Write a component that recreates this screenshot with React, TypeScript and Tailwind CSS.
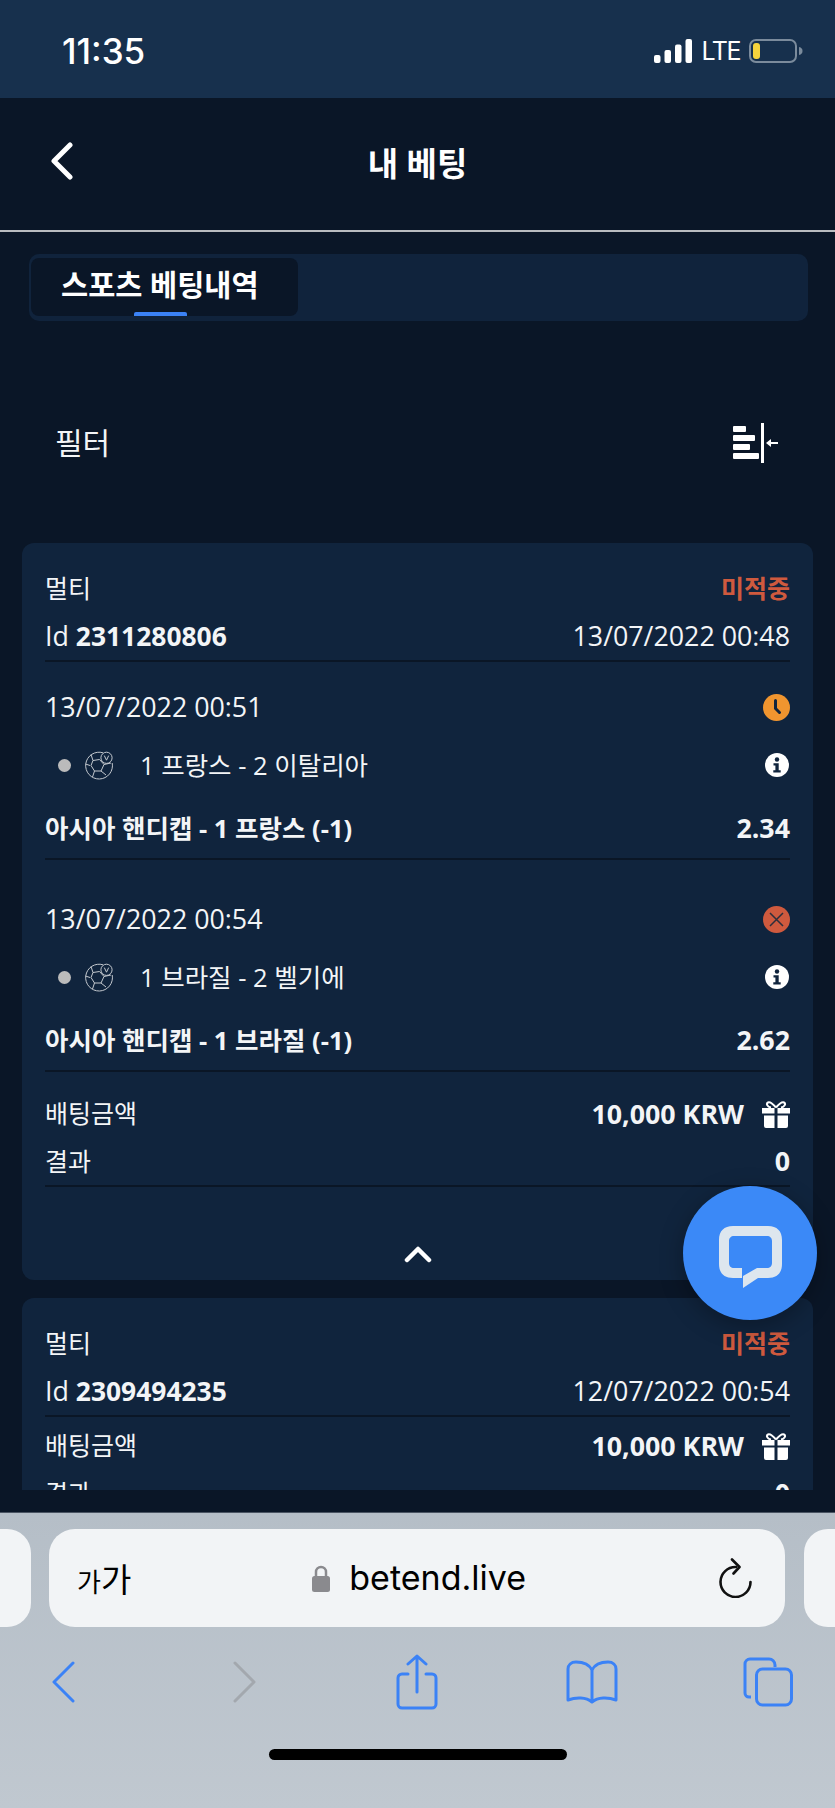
const FONT = "font-['Open_Sans','Noto_Sans_CJK_KR',sans-serif]";

function Row({ left, right, className = '' }: { left: React.ReactNode; right: React.ReactNode; className?: string }) {
  return (
    <div className={`flex items-center justify-between text-[25px] ${className}`}>
      <div>{left}</div>
      <div className="flex items-center">{right}</div>
    </div>
  );
}

function Num({ children, bold }: { children: React.ReactNode; bold?: boolean }) {
  return <span className={`text-[26.800px] ${bold ? 'font-bold' : ''}`}>{children}</span>;
}

function Divider() {
  return <div className="h-[2px] bg-[#0a1626]" />;
}

function Ball() {
  return (
    <svg width="30" height="29" viewBox="0 0 30 29" fill="none" stroke="#c3c8ce" strokeWidth="1">
      <path d="M19 1.800A13.400 13.400 0 1 0 28.200 12" />
      <circle cx="22.500" cy="6.800" r="5.600" />
      <path d="M20.300 4.600l2.200 4.600 2.200-4.600" />
      <path d="M9 9.500l6.500-1 4.500 5-3 6.500h-6.500l-3.500-5.500zM9 9.500L7 3.500M6 14.500l-4.500-1.500M10.500 20l-2 6M17 20l5 4M20 13.500l7-1.500" />
    </svg>
  );
}

function InfoIcon() {
  return (
    <svg width="24" height="24" viewBox="0 0 24 24">
      <circle cx="12" cy="12" r="12" fill="#fff" />
      <circle cx="12" cy="6.500" r="2.200" fill="#10243d" />
      <path d="M8.500 10.200h5.200v7h2v2.200H8.300v-2.200h2.100v-4.800H8.500z" fill="#10243d" />
    </svg>
  );
}

function ClockIcon() {
  return (
    <svg width="27" height="27" viewBox="0 0 27 27">
      <circle cx="13.500" cy="13.500" r="13.500" fill="#f0952f" />
      <path d="M12.500 6.500v8l4 4" fill="none" stroke="#10243d" strokeWidth="3" strokeLinecap="round" />
    </svg>
  );
}

function LostIcon() {
  return (
    <svg width="27" height="27" viewBox="0 0 27 27">
      <circle cx="13.500" cy="13.500" r="13.500" fill="#cf5a3e" />
      <path d="M7 7l13 13M20 7L7 20" stroke="#2c2f3c" strokeWidth="1.500" />
    </svg>
  );
}

function GiftIcon() {
  return (
    <svg width="28" height="27" viewBox="0 0 28 27" fill="#fff" className="ml-[18px]">
      <path d="M0 7h12.500v5.500H0zM15.500 7H28v5.500H15.500zM2 14.500h10.500V27H4a2 2 0 0 1-2-2zM15.500 14.500H26V25a2 2 0 0 1-2 2h-8.500z" />
      <path d="M14 6.500C11 3 8 .5 6 1.500 4 2.500 5 6 9 6.500M14 6.500C17 3 20 .5 22 1.500 24 2.500 23 6 19 6.500" fill="none" stroke="#fff" strokeWidth="2" />
    </svg>
  );
}

function Selection({ date, status, teams, market, odds, className = '' }: { date: string; status: React.ReactNode; teams: string; market: string; odds: string; className?: string }) {
  return (
    <div className={className}>
      <Row className="h-[42px]" left={<Num>{date}</Num>} right={status} />
      <div className="flex h-[74px] items-center justify-between text-[25.500px]">
        <div className="flex items-center">
          <span className="ml-[13px] h-[13px] w-[13px] rounded-full bg-[#bbbbbb]" />
          <span className="ml-[13px]"><Ball /></span>
          <span className="ml-[26px]">{teams}</span>
        </div>
        <span className="mr-[1px]"><InfoIcon /></span>
      </div>
      <Row className="h-[52px] font-bold" left={<span className="text-[25.500px]">{market}</span>} right={<Num>{odds}</Num>} />
      <div className="h-[4px]" />
    </div>
  );
}

function CardHead({ id, date }: { id: string; date: string }) {
  return (
    <>
      <Row className="h-[46px]" left="멀티" right={<span className="font-semibold text-[#cf5a3e]">미적중</span>} />
      <Row
        className="h-[48px]"
        left={<span className="text-[26.800px]">Id <b className="text-[26.400px]">{id}</b></span>}
        right={<Num>{date}</Num>}
      />
      <Divider />
    </>
  );
}

function Stake() {
  return <Row className="h-[48px]" left="배팅금액" right={<><Num bold>10,000 KRW</Num><GiftIcon /></>} />;
}

function StatusBar() {
  return (
    <div className="flex h-[98px] shrink-0 items-center justify-between bg-[#17304d] pr-[32px] pl-[62px] pt-[4px] text-white">
      <span className="font-['Inter',sans-serif] text-[35px] font-medium">11:35</span>
      <div className="flex items-center">
        <svg width="38" height="24" viewBox="0 0 38 24" fill="#fff">
          <rect x="0" y="16" width="6.500" height="8" rx="2" />
          <rect x="10.500" y="11" width="6.500" height="13" rx="2" />
          <rect x="21" y="5.500" width="6.500" height="18.500" rx="2" />
          <rect x="31.500" y="0" width="6.500" height="24" rx="2" />
        </svg>
        <span className="ml-[10px] font-['Inter',sans-serif] text-[25px] leading-none tracking-[-1.500px]">LTE</span>
        <svg width="54" height="24" viewBox="0 0 54 24" className="ml-[9px]">
          <rect x="1" y="1" width="46" height="22" rx="6" fill="none" stroke="#7b8b9c" strokeWidth="2" />
          <rect x="4" y="4" width="7" height="16" rx="3" fill="#f6d33c" />
          <path d="M50 8c2.500.5 3.500 2 3.500 4s-1 3.500-3.500 4z" fill="#7b8b9c" />
        </svg>
      </div>
    </div>
  );
}

function SafariBar() {
  return (
    <div className="flex h-[296px] shrink-0 flex-col border-t border-[#4a5563] bg-gradient-to-b from-[#b5bec7] to-[#c0c8d0]">
      <div className="mt-[16px] flex h-[98px] items-stretch">
        <div className="w-[31px] rounded-r-[24px] bg-[#f2f4f6]" />
        <div className="ml-[18px] flex w-[736px] items-center rounded-[26px] bg-[#f2f4f6] text-black">
          <span className="ml-[28px] font-['Noto_Sans_CJK_KR',sans-serif] leading-none">
            <span className="text-[26px]">가</span>
            <span className="text-[33px]">가</span>
          </span>
          <svg width="18" height="27" viewBox="0 0 18 27" className="ml-[181px]" fill="none">
            <path d="M4 12V7a5 5 0 0 1 10 0v5" stroke="#8a8a8e" strokeWidth="2.500" />
            <rect x="0" y="11" width="18" height="16" rx="2.500" fill="#8a8a8e" />
          </svg>
          <span className="ml-[19px] font-['Inter',sans-serif] text-[34px] leading-none">betend.live</span>
          <svg width="34" height="40" viewBox="0 0 34 40" fill="none" stroke="#111" strokeWidth="2.600" strokeLinecap="round" strokeLinejoin="round" className="ml-[193px]">
            <path d="M17 9A15 15 0 1 0 31.500 24" />
            <path d="M13 1.500l7.500 7.500-6 6.500" />
          </svg>
        </div>
        <div className="ml-[19px] flex-1 rounded-l-[24px] bg-[#f2f4f6]" />
      </div>
      <div className="mt-[27px] flex h-[56px] items-center">
        <svg width="23" height="42" viewBox="0 0 23 42" fill="none" stroke="#3b82f6" strokeWidth="3" strokeLinecap="round" strokeLinejoin="round" className="ml-[52px]">
          <path d="M21 2L2 21l19 19" />
        </svg>
        <svg width="23" height="42" viewBox="0 0 23 42" fill="none" stroke="#a3a8ae" strokeWidth="3" strokeLinecap="round" strokeLinejoin="round" className="ml-[158px]">
          <path d="M2 2l19 19L2 40" />
        </svg>
        <svg width="42" height="56" viewBox="0 0 42 56" fill="none" stroke="#3b82f6" strokeWidth="3" strokeLinecap="round" strokeLinejoin="round" className="ml-[140px]">
          <path d="M12 20H6a4 4 0 0 0-4 4v26a4 4 0 0 0 4 4h30a4 4 0 0 0 4-4V24a4 4 0 0 0-4-4h-6" />
          <path d="M21 38V2M12 10l9-8 9 8" />
        </svg>
        <svg width="52" height="44" viewBox="0 0 52 44" fill="none" stroke="#3b82f6" strokeWidth="3" strokeLinejoin="round" className="ml-[128px]">
          <path d="M26 10C23 4 17 2 10 2 5 2 2 5 2 9v31c8-3 18-3 24 2 6-5 16-5 24-2V9c0-4-3-7-8-7-7 0-13 2-16 8zM26 10v32" />
        </svg>
        <svg width="50" height="50" viewBox="0 0 50 50" fill="none" stroke="#3b82f6" strokeWidth="3" className="ml-[125px]">
          <path d="M8 40H6a4 4 0 0 1-4-4V7a5 5 0 0 1 5-5h19a6 6 0 0 1 6 6v2" />
          <rect x="13.500" y="12" width="35" height="36" rx="6" />
        </svg>
      </div>
      <div className="mt-[39px] ml-[269px] h-[11px] w-[298px] rounded-full bg-black" />
    </div>
  );
}

export default function App() {
  return (
    <div className={`relative flex h-[1808px] w-[835px] flex-col overflow-hidden bg-[#0a1627] text-[#f3f5f7] ${FONT}`}>
      <StatusBar />

      <header className="relative flex h-[134px] shrink-0 items-center justify-center border-b-2 border-[#b9bcc0]">
        <svg width="24" height="38" viewBox="0 0 24 38" fill="none" stroke="#fff" strokeWidth="5" strokeLinecap="round" strokeLinejoin="round" className="absolute top-[44px] left-[50px]">
          <path d="M20 3L4 19l16 16" />
        </svg>
        <h1 className="text-[33px] font-bold text-white">내 베팅</h1>
      </header>

      <main className="flex min-h-0 flex-1 flex-col pb-[22px]">
        <div className="mt-[22px] mr-[27px] ml-[29px] flex h-[67px] shrink-0 items-start rounded-[10px] bg-[#10233c] p-[4px] pr-0 pl-[2px]">
          <div className="relative flex h-[58px] w-[267px] items-center rounded-[8px] bg-[#0a1627] pb-[4px] pl-[30px] text-[29.500px] font-bold whitespace-nowrap text-white">
            스포츠 베팅내역
            <span className="absolute bottom-0 left-[103px] h-[4px] w-[53px] rounded-t-[2px] bg-[#3b82f6]" />
          </div>
        </div>

        <div className="mt-[81px] flex h-[82px] shrink-0 items-center justify-between pr-[56px] pl-[55px] text-[30px]">
          <span className="mb-[2px]">필터</span>
          <svg width="46" height="40" viewBox="0 0 46 40" fill="#fff" className="mb-[1px]">
            <rect x="0" y="3" width="13" height="6" rx="1" />
            <rect x="0" y="12" width="22" height="6" rx="1" />
            <rect x="0" y="21" width="17" height="6" rx="1" />
            <rect x="0" y="30" width="26" height="6" rx="1" />
            <rect x="28" y="0" width="3" height="40" />
            <path d="M33 20l5-4v3h7v2h-7v3z" />
          </svg>
        </div>

        <div className="mt-[59px] min-h-0 flex-1 overflow-hidden">
          <section className="mx-[22px] rounded-[12px] bg-[#10243d] px-[23px] pt-[23px]">
            <CardHead id="2311280806" date="13/07/2022 00:48" />
            <Selection className="mt-[24px]" date="13/07/2022 00:51" status={<ClockIcon />} teams="1 프랑스 - 2 이탈리아" market="아시아 핸디캡 - 1 프랑스 (-1)" odds="2.34" />
            <Divider />
            <Selection className="mt-[38px]" date="13/07/2022 00:54" status={<LostIcon />} teams="1 브라질 - 2 벨기에" market="아시아 핸디캡 - 1 브라질 (-1)" odds="2.62" />
            <Divider />
            <div className="h-[18px]" />
            <Stake />
            <Row className="h-[47px]" left="결과" right={<Num bold>0</Num>} />
            <Divider />
            <div className="flex h-[93px] justify-center pt-[58px]">
              <svg width="28" height="18" viewBox="0 0 28 18" fill="none" stroke="#fff" strokeWidth="4.500" strokeLinecap="round" strokeLinejoin="round">
                <path d="M3 15L14 4l11 11" />
              </svg>
            </div>
          </section>

          <section className="mx-[22px] mt-[18px] rounded-[12px] bg-[#10243d] px-[23px] pt-[23px] pb-[20px]">
            <CardHead id="2309494235" date="12/07/2022 00:54" />
            <div className="h-[5px]" />
            <Stake />
            <Row className="h-[47px]" left="결과" right={<Num bold>0</Num>} />
          </section>
        </div>
      </main>

      <SafariBar />

      <button className="absolute top-[1186px] left-[683px] flex h-[134px] w-[134px] items-center justify-center rounded-full bg-[#3b89f7] shadow-[0_6px_24px_rgba(0,0,0,0.3)]">
        <svg width="63" height="62" viewBox="0 0 63 62" fill="none" className="mt-[7px]">
          <path fillRule="evenodd" d="M14 0H49C58 0 63 5 63 14V38C63 47 58 52 49 52H39L24 62V52H14C5 52 0 47 0 38V14C0 5 5 0 14 0ZM15 10C12 10 10 12 10 15V37C10 40 12 42 15 42H23V52H24V50L38 42H48C51 42 53 40 53 37V15C53 12 51 10 48 10Z" fill="#dde6ee" />
        </svg>
      </button>
    </div>
  );
}
